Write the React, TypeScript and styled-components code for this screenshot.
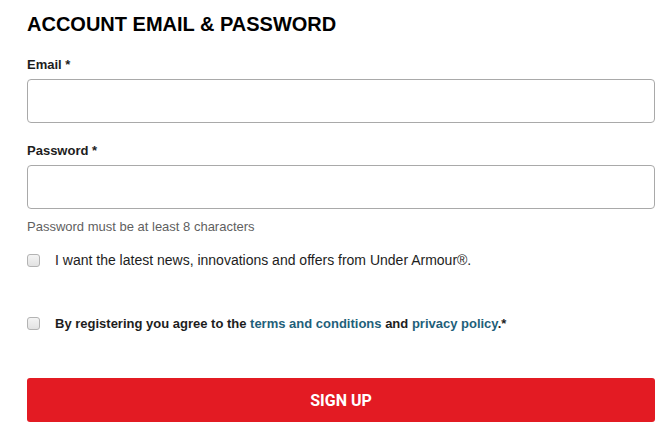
import styled, { createGlobalStyle } from "styled-components";

const GlobalStyle = createGlobalStyle`
  body {
    margin: 0;
    background: #fff;
    font-family: "Liberation Sans", Arial, sans-serif;
    color: #1d1d1d;
  }
`;

export default function App() {
  return (
    <>
      <GlobalStyle />
      <Form onSubmit={(e) => e.preventDefault()}>
        <Title>ACCOUNT EMAIL &amp; PASSWORD</Title>
        <Field>
          <Label htmlFor="email">Email *</Label>
          <Input id="email" type="email" />
        </Field>
        <Field>
          <Label htmlFor="password">Password *</Label>
          <Input id="password" type="password" />
          <Hint>Password must be at least 8 characters</Hint>
        </Field>
        <CheckRow $top={19}>
          <Box type="checkbox" />
          <CheckText $size={14}>
            I want the latest news, innovations and offers from Under Armour®.
          </CheckText>
        </CheckRow>
        <CheckRow $top={48}>
          <Box type="checkbox" />
          <CheckText $bold>
            By registering you agree to the <Link href="#">terms and conditions</Link> and{" "}
            <Link href="#">privacy policy</Link>.*
          </CheckText>
        </CheckRow>
        <Submit type="submit">SIGN UP</Submit>
      </Form>
    </>
  );
}

const Form = styled.form`
  width: 628px;
  padding: 13px 0 0 27px;
  display: flex;
  flex-direction: column;
`;
const Title = styled.h1`
  margin: 0 0 1px;
  font-size: 20px;
  line-height: 23px;
  font-weight: 700;
  color: #000;
`;
const Field = styled.div`
  display: flex;
  flex-direction: column;
  margin-top: 20px;
`;
const Label = styled.label`
  font-size: 13px;
  line-height: 15px;
  font-weight: 700;
  color: #1d1d1d;
  margin-bottom: 7px;
`;
const Input = styled.input`
  box-sizing: border-box;
  height: 44px;
  width: 100%;
  border: 1px solid #a9a9a9;
  border-radius: 4px;
  padding: 0 12px;
  font: inherit;
  outline: none;
`;
const Hint = styled.div`
  margin-top: 10px;
  font-size: 13px;
  line-height: 15px;
  color: #5f5f5f;
`;
const CheckRow = styled.label<{ $top: number }>`
  display: flex;
  align-items: center;
  margin-top: ${(p) => p.$top}px;
`;
const Box = styled.input`
  appearance: none;
  margin: 0 15px 0 0;
  width: 13px;
  height: 13px;
  flex: none;
  box-sizing: border-box;
  border: 1px solid #b3b3b3;
  border-radius: 3px;
  background: linear-gradient(#f4f4f4, #e2e2e2);
`;
const CheckText = styled.span<{ $bold?: boolean; $size?: number }>`
  font-size: ${(p) => p.$size ?? 13}px;
  line-height: 15px;
  font-weight: ${(p) => (p.$bold ? 700 : 400)};
  color: #1d1d1d;
`;
const Link = styled.a`
  color: #1f5f7a;
  text-decoration: none;
`;
const Submit = styled.button`
  margin-top: 47px;
  height: 44px;
  width: 100%;
  border: none;
  border-radius: 3px;
  background: #e31b23;
  color: #fff;
  font-family: "Liberation Sans Narrow", "Roboto", Arial, sans-serif;
  font-weight: 700;
  font-size: 16px;
  cursor: pointer;
`;
